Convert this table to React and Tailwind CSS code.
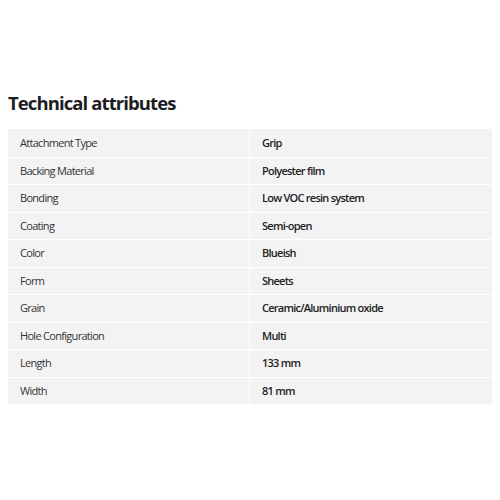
const rows = [
  ["Attachment Type", "Grip"],
  ["Backing Material", "Polyester film"],
  ["Bonding", "Low VOC resin system"],
  ["Coating", "Semi-open"],
  ["Color", "Blueish"],
  ["Form", "Sheets"],
  ["Grain", "Ceramic/Aluminium oxide"],
  ["Hole Configuration", "Multi"],
  ["Length", "133 mm"],
  ["Width", "81 mm"],
];

export default function App() {
  return (
    <div className="w-[500px] h-[500px] bg-white pt-[90px] px-2 font-['Open_Sans',sans-serif] text-[#1d1d1f]">
      <h2 className="text-[18.5px] font-bold leading-[26px] tracking-[-0.9px] mb-[13px]">Technical attributes</h2>
      <div className="bg-[#f4f3f4] flex flex-col">
        {rows.map(([label, value], i) => (
          <div key={label} className={`flex h-[27.5px] items-center text-[11px] tracking-[-0.7px] ${i > 0 ? "border-t border-white" : ""}`}>
            <div className="w-[242px] pl-3 border-r border-white h-full flex items-center text-[#333]">{label}</div>
            <div className="pl-3 font-semibold tracking-[-0.75px] text-[#222]">{value}</div>
          </div>
        ))}
      </div>
    </div>
  );
}
